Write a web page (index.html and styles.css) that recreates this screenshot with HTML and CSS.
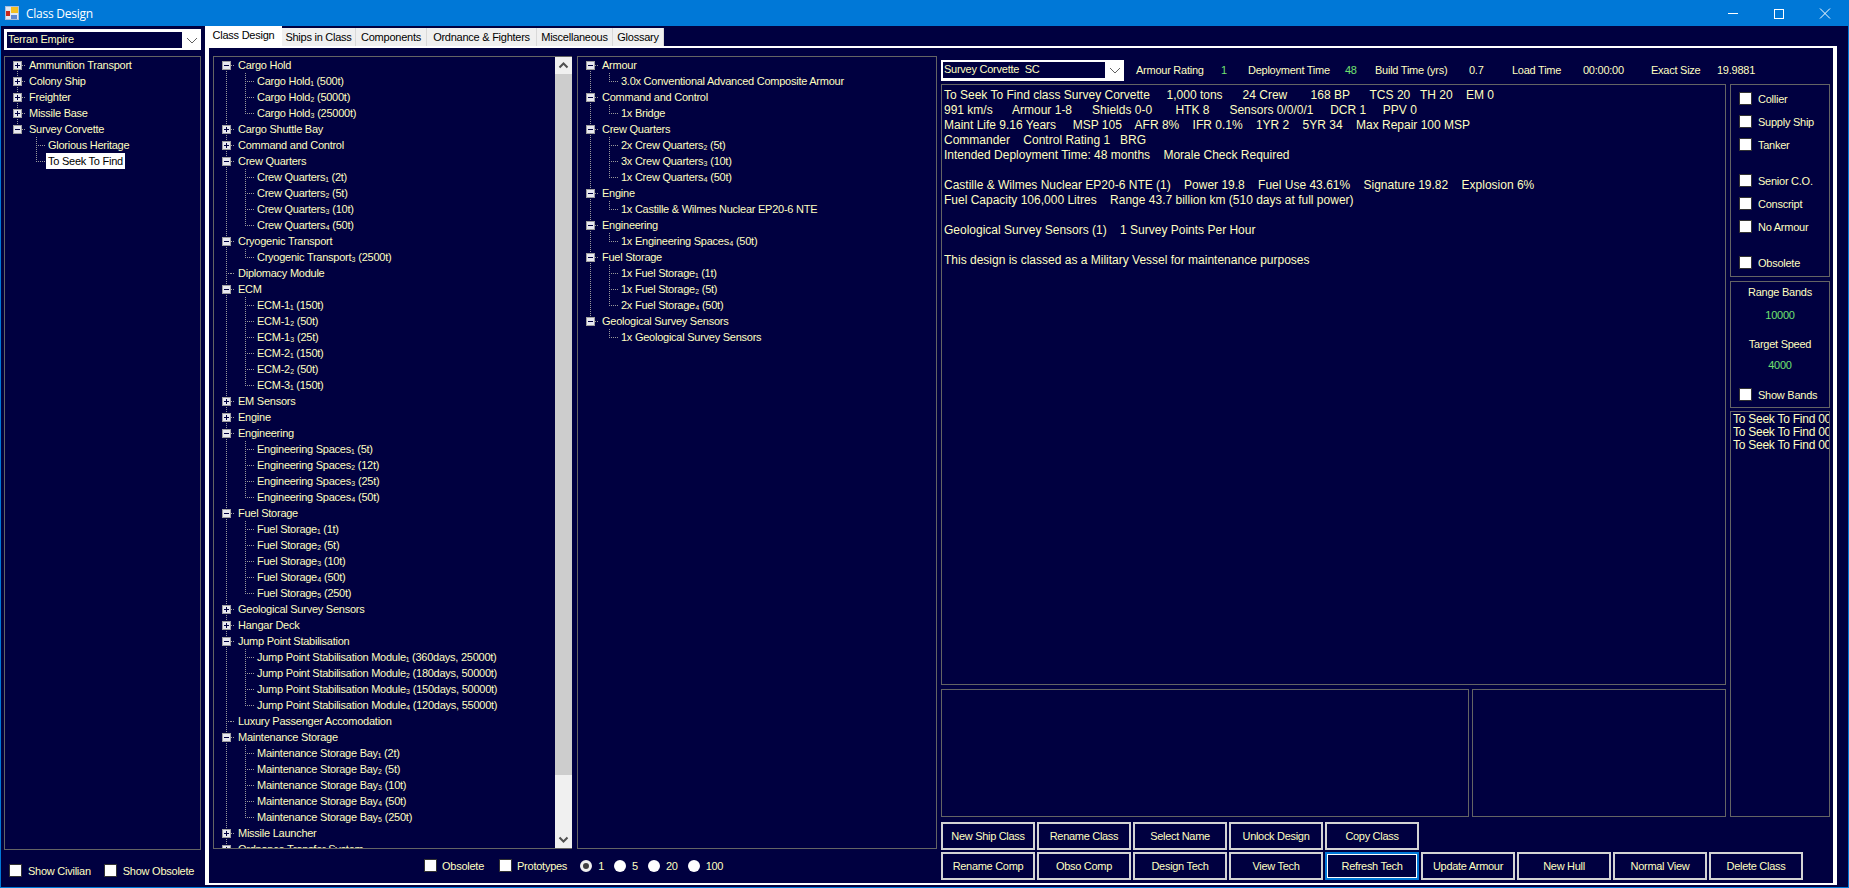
FILE: index.html
```html
<!DOCTYPE html>
<html lang="en">
	<head>
		<meta charset="UTF-8" />
		<title>Class Design</title>
		<link rel="stylesheet" href="styles.css">
	</head>
	<body>
		<div class="window">
			<div class="titlebar">
				<svg class="app-icon" width="14" height="14" viewBox="0 0 14 14">
					<rect x="0" y="0" width="14" height="14" fill="#a9bfdc"/>
					<rect x="1" y="1" width="12" height="12" fill="#dfe8f4"/>
					<rect x="1" y="5" width="4" height="5" fill="#c8281c"/>
					<rect x="6" y="1" width="7" height="6" fill="#f4c020"/>
					<rect x="6" y="9" width="6" height="4" fill="#5f86d0"/>
				</svg>
				<span class="title">Class Design</span>
				<div class="caption">
					<svg width="46" height="26" viewBox="0 0 46 26"><path d="M18 13.5h10" stroke="#fff"/></svg>
					<svg width="46" height="26" viewBox="0 0 46 26"><rect x="18.5" y="9.5" width="9" height="9" fill="none" stroke="#fff"/></svg>
					<svg width="46" height="26" viewBox="0 0 46 26"><path d="M18 8.5l10 10M28 8.5l-10 10" stroke="#fff" fill="none"/></svg>
				</div>
			</div>
			<div class="client">
				<div class="sidebar">
					<div class="combo side-combo">
						<span class="combo-text">Terran Empire</span>
						<svg class="chev" width="16" height="16" viewBox="0 0 16 16"><path d="M3 6l5 5 5-5" fill="none" stroke="#606060"/></svg>
					</div>
					<div class="box side-tree">
						<div class="tree">
							<div class="group"><div class="node"><i class="exp plus"></i>Ammunition Transport</div></div>
							<div class="group"><div class="node"><i class="exp plus"></i>Colony Ship</div></div>
							<div class="group"><div class="node"><i class="exp plus"></i>Freighter</div></div>
							<div class="group"><div class="node"><i class="exp plus"></i>Missile Base</div></div>
							<div class="group">
								<div class="node"><i class="exp minus"></i>Survey Corvette</div>
								<div class="kids">
									<div class="kid"><span>Glorious Heritage</span></div>
									<div class="kid"><span class="selected">To Seek To Find</span></div>
								</div>
							</div>
						</div>
					</div>
					<div class="side-checks">
						<label class="check"><i class="tick"></i>Show Civilian</label>
						<label class="check"><i class="tick"></i>Show Obsolete</label>
					</div>
				</div>

				<div class="main">
					<div class="tabs">
						<div class="tab active">Class Design</div>
						<div class="tab t2">Ships in Class</div>
						<div class="tab t3">Components</div>
						<div class="tab t4">Ordnance &amp; Fighters</div>
						<div class="tab t5">Miscellaneous</div>
						<div class="tab t6">Glossary</div>
					</div>
					<div class="page">
						<div class="trees-col">
							<div class="trees">
								<div class="box comp-tree">
									<div class="tree open">
										<div class="group">
											<div class="node"><i class="exp minus"></i>Cargo Hold</div>
											<div class="kids">
												<div class="kid"><span>Cargo Hold₁ (500t)</span></div>
												<div class="kid"><span>Cargo Hold₂ (5000t)</span></div>
												<div class="kid"><span>Cargo Hold₃ (25000t)</span></div>
											</div>
										</div>
										<div class="group"><div class="node"><i class="exp plus"></i>Cargo Shuttle Bay</div></div>
										<div class="group"><div class="node"><i class="exp plus"></i>Command and Control</div></div>
										<div class="group">
											<div class="node"><i class="exp minus"></i>Crew Quarters</div>
											<div class="kids">
												<div class="kid"><span>Crew Quarters₁ (2t)</span></div>
												<div class="kid"><span>Crew Quarters₂ (5t)</span></div>
												<div class="kid"><span>Crew Quarters₃ (10t)</span></div>
												<div class="kid"><span>Crew Quarters₄ (50t)</span></div>
											</div>
										</div>
										<div class="group">
											<div class="node"><i class="exp minus"></i>Cryogenic Transport</div>
											<div class="kids">
												<div class="kid"><span>Cryogenic Transport₃ (2500t)</span></div>
											</div>
										</div>
										<div class="group"><div class="node"><i class="exp leaf"></i>Diplomacy Module</div></div>
										<div class="group">
											<div class="node"><i class="exp minus"></i>ECM</div>
											<div class="kids">
												<div class="kid"><span>ECM-1₁ (150t)</span></div>
												<div class="kid"><span>ECM-1₂ (50t)</span></div>
												<div class="kid"><span>ECM-1₃ (25t)</span></div>
												<div class="kid"><span>ECM-2₁ (150t)</span></div>
												<div class="kid"><span>ECM-2₂ (50t)</span></div>
												<div class="kid"><span>ECM-3₁ (150t)</span></div>
											</div>
										</div>
										<div class="group"><div class="node"><i class="exp plus"></i>EM Sensors</div></div>
										<div class="group"><div class="node"><i class="exp plus"></i>Engine</div></div>
										<div class="group">
											<div class="node"><i class="exp minus"></i>Engineering</div>
											<div class="kids">
												<div class="kid"><span>Engineering Spaces₁ (5t)</span></div>
												<div class="kid"><span>Engineering Spaces₂ (12t)</span></div>
												<div class="kid"><span>Engineering Spaces₃ (25t)</span></div>
												<div class="kid"><span>Engineering Spaces₄ (50t)</span></div>
											</div>
										</div>
										<div class="group">
											<div class="node"><i class="exp minus"></i>Fuel Storage</div>
											<div class="kids">
												<div class="kid"><span>Fuel Storage₁ (1t)</span></div>
												<div class="kid"><span>Fuel Storage₂ (5t)</span></div>
												<div class="kid"><span>Fuel Storage₃ (10t)</span></div>
												<div class="kid"><span>Fuel Storage₄ (50t)</span></div>
												<div class="kid"><span>Fuel Storage₅ (250t)</span></div>
											</div>
										</div>
										<div class="group"><div class="node"><i class="exp plus"></i>Geological Survey Sensors</div></div>
										<div class="group"><div class="node"><i class="exp plus"></i>Hangar Deck</div></div>
										<div class="group">
											<div class="node"><i class="exp minus"></i>Jump Point Stabilisation</div>
											<div class="kids">
												<div class="kid"><span>Jump Point Stabilisation Module₁ (360days, 25000t)</span></div>
												<div class="kid"><span>Jump Point Stabilisation Module₂ (180days, 50000t)</span></div>
												<div class="kid"><span>Jump Point Stabilisation Module₃ (150days, 50000t)</span></div>
												<div class="kid"><span>Jump Point Stabilisation Module₄ (120days, 55000t)</span></div>
											</div>
										</div>
										<div class="group"><div class="node"><i class="exp leaf"></i>Luxury Passenger Accomodation</div></div>
										<div class="group">
											<div class="node"><i class="exp minus"></i>Maintenance Storage</div>
											<div class="kids">
												<div class="kid"><span>Maintenance Storage Bay₁ (2t)</span></div>
												<div class="kid"><span>Maintenance Storage Bay₂ (5t)</span></div>
												<div class="kid"><span>Maintenance Storage Bay₃ (10t)</span></div>
												<div class="kid"><span>Maintenance Storage Bay₄ (50t)</span></div>
												<div class="kid"><span>Maintenance Storage Bay₅ (250t)</span></div>
											</div>
										</div>
										<div class="group"><div class="node"><i class="exp plus"></i>Missile Launcher</div></div>
										<div class="group"><div class="node"><i class="exp plus"></i>Ordnance Transfer System</div></div>
									</div>
									<div class="scrollbar">
										<div class="sb-btn"><svg width="17" height="17" viewBox="0 0 17 17"><path d="M4.5 10.5l4-4 4 4" fill="none" stroke="#505050" stroke-width="2"/></svg></div>
										<div class="sb-thumb"></div>
										<div class="sb-track"></div>
										<div class="sb-btn"><svg width="17" height="17" viewBox="0 0 17 17"><path d="M4.5 6.5l4 4 4-4" fill="none" stroke="#505050" stroke-width="2"/></svg></div>
									</div>
								</div>
								<div class="box class-tree">
									<div class="tree">
										<div class="group">
											<div class="node"><i class="exp minus"></i>Armour</div>
											<div class="kids">
												<div class="kid"><span>3.0x Conventional Advanced Composite Armour</span></div>
											</div>
										</div>
										<div class="group">
											<div class="node"><i class="exp minus"></i>Command and Control</div>
											<div class="kids">
												<div class="kid"><span>1x Bridge</span></div>
											</div>
										</div>
										<div class="group">
											<div class="node"><i class="exp minus"></i>Crew Quarters</div>
											<div class="kids">
												<div class="kid"><span>2x Crew Quarters₂ (5t)</span></div>
												<div class="kid"><span>3x Crew Quarters₃ (10t)</span></div>
												<div class="kid"><span>1x Crew Quarters₄ (50t)</span></div>
											</div>
										</div>
										<div class="group">
											<div class="node"><i class="exp minus"></i>Engine</div>
											<div class="kids">
												<div class="kid"><span>1x Castille &amp; Wilmes Nuclear EP20-6 NTE</span></div>
											</div>
										</div>
										<div class="group">
											<div class="node"><i class="exp minus"></i>Engineering</div>
											<div class="kids">
												<div class="kid"><span>1x Engineering Spaces₄ (50t)</span></div>
											</div>
										</div>
										<div class="group">
											<div class="node"><i class="exp minus"></i>Fuel Storage</div>
											<div class="kids">
												<div class="kid"><span>1x Fuel Storage₁ (1t)</span></div>
												<div class="kid"><span>1x Fuel Storage₂ (5t)</span></div>
												<div class="kid"><span>2x Fuel Storage₄ (50t)</span></div>
											</div>
										</div>
										<div class="group">
											<div class="node"><i class="exp minus"></i>Geological Survey Sensors</div>
											<div class="kids">
												<div class="kid"><span>1x Geological Survey Sensors</span></div>
											</div>
										</div>
									</div>
								</div>
							</div>
							<div class="filters">
								<label class="check"><i class="tick"></i>Obsolete</label>
								<label class="check"><i class="tick"></i>Prototypes</label>
								<label class="radio first"><i class="dot on"></i>1</label>
								<label class="radio"><i class="dot"></i>5</label>
								<label class="radio"><i class="dot"></i>20</label>
								<label class="radio"><i class="dot"></i>100</label>
							</div>
						</div>

						<div class="design">
							<div class="header">
								<div class="combo class-combo">
									<span class="combo-text">Survey Corvette&nbsp; SC</span>
									<svg class="chev" width="16" height="16" viewBox="0 0 16 16"><path d="M3 6l5 5 5-5" fill="none" stroke="#606060"/></svg>
								</div>
								<span class="h-item h1">Armour Rating</span>
								<span class="h-item h2 green">1</span>
								<span class="h-item h3">Deployment Time</span>
								<span class="h-item h4 green">48</span>
								<span class="h-item h5">Build Time (yrs)</span>
								<span class="h-item h6">0.7</span>
								<span class="h-item h7">Load Time</span>
								<span class="h-item h8">00:00:00</span>
								<span class="h-item h9">Exact Size</span>
								<span class="h-item h10">19.9881</span>
							</div>
							<div class="design-body">
								<div class="design-left">
									<div class="box summary">To Seek To Find class Survey Corvette     1,000 tons      24 Crew       168 BP      TCS 20   TH 20    EM 0
991 km/s      Armour 1-8      Shields 0-0       HTK 8      Sensors 0/0/0/1     DCR 1     PPV 0
Maint Life 9.16 Years     MSP 105    AFR 8%    IFR 0.1%    1YR 2    5YR 34    Max Repair 100 MSP
Commander    Control Rating 1   BRG
Intended Deployment Time: 48 months    Morale Check Required

Castille &amp; Wilmes Nuclear EP20-6 NTE (1)    Power 19.8    Fuel Use 43.61%    Signature 19.82    Explosion 6%
Fuel Capacity 106,000 Litres    Range 43.7 billion km (510 days at full power)

Geological Survey Sensors (1)    1 Survey Points Per Hour

This design is classed as a Military Vessel for maintenance purposes</div>
									<div class="lower">
										<div class="box lower-a"></div>
										<div class="box lower-b"></div>
									</div>
								</div>
								<div class="design-right">
									<div class="box flags">
										<label class="check flag"><i class="tick"></i>Collier</label>
										<label class="check flag"><i class="tick"></i>Supply Ship</label>
										<label class="check flag gap"><i class="tick"></i>Tanker</label>
										<label class="check flag"><i class="tick"></i>Senior C.O.</label>
										<label class="check flag"><i class="tick"></i>Conscript</label>
										<label class="check flag gap"><i class="tick"></i>No Armour</label>
										<label class="check flag"><i class="tick"></i>Obsolete</label>
									</div>
									<div class="box bands">
										<div class="band-l">Range Bands</div>
										<div class="band-v green">10000</div>
										<div class="band-l second">Target Speed</div>
										<div class="band-v green">4000</div>
										<label class="check band-check"><i class="tick"></i>Show Bands</label>
									</div>
									<div class="box names">
										<div>To Seek To Find 001</div>
										<div>To Seek To Find 002</div>
										<div>To Seek To Find 003</div>
									</div>
								</div>
							</div>
							<div class="buttons">
								<div class="btn-row">
									<div class="btn">New Ship Class</div>
									<div class="btn">Rename Class</div>
									<div class="btn">Select Name</div>
									<div class="btn">Unlock Design</div>
									<div class="btn">Copy Class</div>
								</div>
								<div class="btn-row">
									<div class="btn">Rename Comp</div>
									<div class="btn">Obso Comp</div>
									<div class="btn">Design Tech</div>
									<div class="btn">View Tech</div>
									<div class="btn focus">Refresh Tech</div>
									<div class="btn">Update Armour</div>
									<div class="btn">New Hull</div>
									<div class="btn">Normal View</div>
									<div class="btn">Delete Class</div>
								</div>
							</div>
						</div>
					</div>
				</div>
			</div>
		</div>
	</body>
</html>
```

FILE: styles.css
```css
* {
	margin: 0;
	padding: 0;
	box-sizing: border-box;
}
html, body {
	height: 100%;
	overflow: hidden;
}
body {
	background-color: #0078d7;
	font-family: "Liberation Sans", sans-serif;
	font-size: 11px;
	letter-spacing: -0.25px;
	color: #ffffc0;
}
i {
	display: block;
	font-style: normal;
	flex: none;
}
.window {
	width: 1849px;
	height: 888px;
	display: flex;
	flex-direction: column;
	padding: 0 1px 1px 1px;
}
.titlebar {
	height: 26px;
	flex: none;
	display: flex;
	align-items: center;
	color: #fff;
	padding-left: 4px;
}
.app-icon {
	margin-right: 7px;
}
.title {
	font-family: "Open Sans", sans-serif;
	font-size: 12px;
}
.caption {
	margin-left: auto;
	display: flex;
}
.caption svg {
	display: block;
}
.client {
	flex: 1;
	display: flex;
	background-color: #000040;
	min-height: 0;
}

/* left column */
.sidebar {
	width: 204px;
	flex: none;
	padding: 3px 3px 0 3px;
	display: flex;
	flex-direction: column;
}
.combo {
	height: 21px;
	background-color: #fff;
	display: flex;
	align-items: center;
	flex: none;
}
.combo-text {
	background-color: #000040;
	height: 16px;
	margin-left: 2px;
	line-height: 15px;
	padding-left: 1px;
	white-space: nowrap;
}
.chev {
	margin-left: auto;
	margin-right: 1px;
}
.side-combo {
	width: 197px;
}
.side-combo .combo-text {
	width: 175px;
	margin-left: 3px;
}
.box {
	border: 1px solid #646464;
}
.side-tree {
	width: 197px;
	margin-top: 6px;
	height: 794px;
}
.side-checks {
	display: flex;
	margin-top: 14px;
	padding-left: 5px;
	gap: 13px;
}
.check {
	display: flex;
	align-items: center;
	gap: 6px;
}
.tick {
	width: 13px;
	height: 13px;
	background-color: #fff;
	border: 1px solid #333;
}

/* trees */
.tree {
	--line: repeating-linear-gradient(#9a9a9a 0 1px, transparent 1px 2px);
	--dash: repeating-linear-gradient(90deg, #9a9a9a 0 1px, transparent 1px 2px);
	flex: 1;
	min-width: 0;
	overflow: hidden;
	background-image: var(--line);
	background-repeat: no-repeat;
	background-size: 1px 100%;
	background-position: 12px 8px;
}
.node, .kid {
	height: 16px;
	line-height: 16px;
	white-space: nowrap;
	display: flex;
	align-items: center;
}
.node {
	padding-left: 8px;
	background: var(--dash) no-repeat 17px 8px / 4px 1px;
}
.exp {
	width: 9px;
	height: 9px;
	margin-right: 7px;
	background-color: #e8e8f0;
	border: 1px solid #a0a0a0;
}
.exp.plus {
	background-image: linear-gradient(#000040, #000040), linear-gradient(#000040, #000040);
	background-size: 5px 1px, 1px 5px;
	background-position: center;
	background-repeat: no-repeat;
}
.exp.minus {
	background-image: linear-gradient(#000040, #000040);
	background-size: 5px 1px;
	background-position: center;
	background-repeat: no-repeat;
}
.exp.leaf {
	background: var(--dash) no-repeat 4px center / 5px 1px;
	border: none;
}
.kid {
	padding-left: 41px;
	background-image: var(--line), var(--dash);
	background-repeat: no-repeat;
	background-position: 31px 0, 31px 8px;
	background-size: 1px 100%, 9px 1px;
}
.kid:last-child {
	background-size: 1px 8px, 9px 1px;
}
.group:last-child .kids {
	background-color: #000040;
}
/* the root line stops at the last node */
.group:last-child .node {
	background: var(--dash) no-repeat 17px 8px / 4px 1px, linear-gradient(transparent 8px, #000040 8px);
}
.kid span {
	padding: 0 2px;
	line-height: 16px;
}
.kid .selected {
	background-color: #fff;
	color: #000;
}

/* tabs */
.main {
	flex: 1;
	min-width: 0;
	display: flex;
	flex-direction: column;
	padding: 0 11px 2px 0;
}
.tabs {
	height: 20px;
	flex: none;
	display: flex;
	align-items: flex-end;
}
.tab {
	height: 18px;
	line-height: 18px;
	background-color: #f0f0f0;
	color: #000;
	border-right: 1px solid #d9d9d9;
	text-align: center;
	white-space: nowrap;
}
.tab.active {
	width: 77px;
	height: 20px;
	line-height: 19px;
	background-color: #fff;
	border: none;
}
.t2 { width: 74px; }
.t3 { width: 71px; }
.t4 { width: 110px; }
.t5 { width: 76px; }
.t6 { width: 51px; }
.page {
	flex: 1;
	min-height: 0;
	border: solid #fff;
	border-width: 2px 4px 2px 4px;
	display: flex;
	padding: 8px 3px 0 4px;
}

/* middle */
.trees-col {
	width: 724px;
	flex: none;
	display: flex;
	flex-direction: column;
}
.trees {
	height: 793px;
	display: flex;
	flex: none;
	gap: 5px;
}
.comp-tree {
	width: 359px;
	display: flex;
	border-right: none;
}
.class-tree {
	width: 360px;
	overflow: hidden;
}
.scrollbar {
	width: 17px;
	flex: none;
	display: flex;
	flex-direction: column;
	background-color: #f0f0f0;
}
.sb-btn {
	height: 17px;
	flex: none;
	background-color: #f0f0f0;
}
.sb-btn svg {
	display: block;
}
.sb-thumb {
	height: 701px;
	flex: none;
	background-color: #cdcdcd;
}
.sb-track {
	flex: 1;
}
.filters {
	display: flex;
	align-items: center;
	margin-top: 10px;
	padding-left: 211px;
}
.filters .check {
	margin-right: 15px;
	gap: 5px;
}
.radio {
	display: flex;
	align-items: center;
	gap: 6px;
	margin-right: 10px;
}
.radio.first {
	margin-left: -2px;
}
.dot {
	width: 12px;
	height: 12px;
	border-radius: 50%;
	background-color: #fff;
}
.dot.on {
	border: 3px solid #f0f0f0;
	background-color: #404040;
}

/* right part */
.design {
	flex: 1;
	min-width: 0;
	display: flex;
	flex-direction: column;
	padding-left: 4px;
}
.header {
	height: 28px;
	flex: none;
	display: flex;
	align-items: center;
}
.class-combo {
	width: 183px;
	margin-right: 12px;
}
.class-combo .combo-text {
	width: 162px;
}
.green {
	color: #70e070;
}
.h-item {
	white-space: nowrap;
	flex: none;
}
.h1 { width: 85px; }
.h2 { width: 27px; }
.h3 { width: 97px; }
.h4 { width: 30px; }
.h5 { width: 94px; }
.h6 { width: 43px; }
.h7 { width: 71px; }
.h8 { width: 68px; }
.h9 { width: 66px; }
.design-body {
	height: 733px;
	flex: none;
	display: flex;
}
.design-left {
	width: 785px;
	flex: none;
	display: flex;
	flex-direction: column;
}
.summary {
	height: 601px;
	flex: none;
	padding: 3px 0 0 2px;
	font-size: 12px;
	letter-spacing: 0;
	line-height: 15px;
	white-space: pre;
	overflow: hidden;
}
.lower {
	display: flex;
	gap: 3px;
	margin-top: 4px;
	height: 128px;
}
.lower-a {
	width: 528px;
}
.lower-b {
	flex: 1;
}
.design-right {
	width: 100px;
	margin-left: 4px;
	flex: none;
	display: flex;
	flex-direction: column;
}
.flags {
	height: 193px;
	flex: none;
	padding: 2px 0 0 8px;
}
.flag {
	height: 23px;
}
.flag.gap {
	margin-bottom: 13px;
}
.bands {
	height: 127px;
	flex: none;
	margin-top: 4px;
	text-align: center;
	padding-top: 2px;
}
.band-l {
	height: 23px;
	line-height: 16px;
}
.band-l.second {
	height: 21px;
}
.band-v {
	height: 29px;
	line-height: 16px;
}
.band-check {
	padding-left: 8px;
	margin-top: 2px;
}
.names {
	flex: 1;
	margin-top: 3px;
	padding: 1px 0 0 2px;
	font-size: 12px;
	letter-spacing: -0.25px;
	line-height: 13px;
	white-space: nowrap;
	overflow: hidden;
}
.buttons {
	display: flex;
	flex-direction: column;
	gap: 2px;
	margin-top: 5px;
}
.btn-row {
	display: flex;
	gap: 2px;
}
.btn {
	width: 94px;
	height: 28px;
	border: 2px solid #d4d4d4;
	display: flex;
	align-items: center;
	justify-content: center;
	white-space: nowrap;
	letter-spacing: -0.3px;
}
.btn.focus {
	border-color: #0078d7;
	outline: 1px solid #fff;
	outline-offset: -3px;
}
```
